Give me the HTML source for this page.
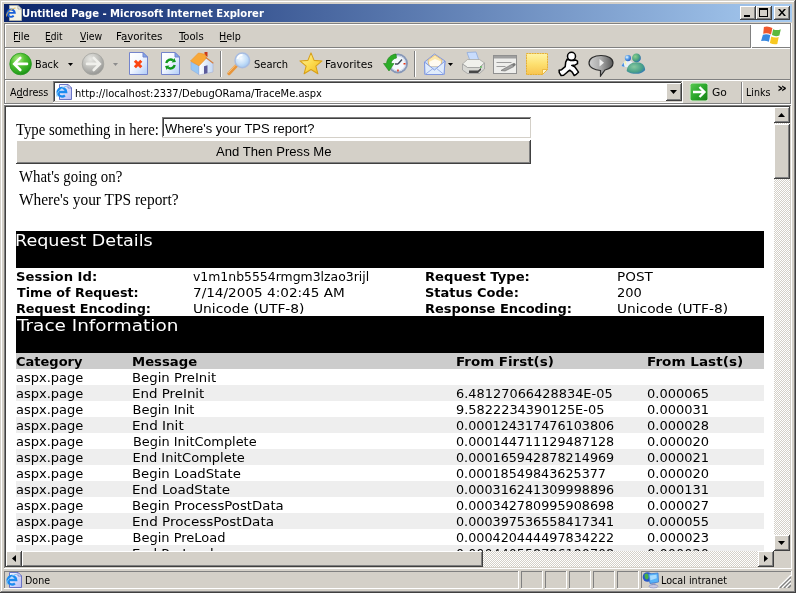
<!DOCTYPE html>
<html><head><meta charset="utf-8"><title>Untitled Page - Microsoft Internet Explorer</title>
<style>
html,body{margin:0;padding:0}
body{width:796px;height:593px;overflow:hidden;background:#d4d0c8;position:relative}
#w{position:absolute;left:0;top:0;width:796px;height:593px;overflow:hidden;will-change:transform}
#w div,#w span,#w svg{position:absolute}
#w span{white-space:pre;line-height:20px;transform-origin:0 0}
#w span.ui{font:11px 'DejaVu Sans Condensed','Liberation Sans',sans-serif;line-height:20px}
#w span.uib{font:bold 11px 'DejaVu Sans Condensed','Liberation Sans',sans-serif;line-height:20px}
#w span.serif{font:16px 'Liberation Serif',serif;line-height:20px}
#w span.arial{font:13.33px 'Liberation Sans',sans-serif;line-height:20px}
#w span.v13{font:13px 'DejaVu Sans','Liberation Sans',sans-serif;line-height:20px}
#w span.v13b{font:bold 13px 'DejaVu Sans','Liberation Sans',sans-serif;line-height:20px}
#w span.v16{font:16px 'DejaVu Sans','Liberation Sans',sans-serif;line-height:20px}
</style></head>
<body><div id="w">
<div style="left:0px;top:0px;width:796px;height:593px;background:#d4d0c8;"></div>
<div style="left:1px;top:1px;width:793px;height:1px;background:#ffffff;"></div>
<div style="left:1px;top:1px;width:1px;height:590px;background:#ffffff;"></div>
<div style="left:0px;top:592px;width:796px;height:1px;background:#404040;"></div>
<div style="left:795px;top:0px;width:1px;height:593px;background:#404040;"></div>
<div style="left:1px;top:591px;width:794px;height:1px;background:#808080;"></div>
<div style="left:794px;top:1px;width:1px;height:591px;background:#808080;"></div>
<div style="left:4px;top:4px;width:788px;height:18px;background:linear-gradient(to right,#0a246a,#a6caf0);"></div>
<svg style="left:6px;top:5px" width="17" height="17" viewBox="0 0 17 17"><path d="M3.500 .5h8.500l3.500 3.500v11.500h-12z" fill="#f2f2e6" stroke="#b8b8a8" stroke-width=".8"/><path d="M12 .5v3.500h3.500z" fill="#fff" stroke="#88887c" stroke-width=".6"/><path d="M1.600 7.900h7.200a3.700 3.700 0 1 0-1.100 2.900" fill="none" stroke="#1860d8" stroke-width="1.900"/><path d="M.6 11.500C-.5 8.500 5 3.500 9.500 3" fill="none" stroke="#e8b850" stroke-width=".9"/></svg>
<span class="uib" style="left:21.99px;top:4.00px;color:#fff;transform:scaleX(1.0126);">Untitled Page - Microsoft Internet Explorer</span>
<div style="left:740px;top:6px;width:16px;height:14px;background:#d4d0c8;"></div>
<div style="left:740px;top:6px;width:15px;height:1px;background:#ffffff;"></div>
<div style="left:740px;top:6px;width:1px;height:13px;background:#ffffff;"></div>
<div style="left:740px;top:19px;width:16px;height:1px;background:#404040;"></div>
<div style="left:755px;top:6px;width:1px;height:14px;background:#404040;"></div>
<div style="left:741px;top:18px;width:14px;height:1px;background:#808080;"></div>
<div style="left:754px;top:7px;width:1px;height:12px;background:#808080;"></div>
<div style="left:756px;top:6px;width:16px;height:14px;background:#d4d0c8;"></div>
<div style="left:756px;top:6px;width:15px;height:1px;background:#ffffff;"></div>
<div style="left:756px;top:6px;width:1px;height:13px;background:#ffffff;"></div>
<div style="left:756px;top:19px;width:16px;height:1px;background:#404040;"></div>
<div style="left:771px;top:6px;width:1px;height:14px;background:#404040;"></div>
<div style="left:757px;top:18px;width:14px;height:1px;background:#808080;"></div>
<div style="left:770px;top:7px;width:1px;height:12px;background:#808080;"></div>
<div style="left:774px;top:6px;width:16px;height:14px;background:#d4d0c8;"></div>
<div style="left:774px;top:6px;width:15px;height:1px;background:#ffffff;"></div>
<div style="left:774px;top:6px;width:1px;height:13px;background:#ffffff;"></div>
<div style="left:774px;top:19px;width:16px;height:1px;background:#404040;"></div>
<div style="left:789px;top:6px;width:1px;height:14px;background:#404040;"></div>
<div style="left:775px;top:18px;width:14px;height:1px;background:#808080;"></div>
<div style="left:788px;top:7px;width:1px;height:12px;background:#808080;"></div>
<div style="left:744px;top:15px;width:6px;height:2px;background:#000;"></div>
<div style="left:759px;top:8px;width:9px;height:9px;background:transparent;border:1px solid #000;border-top:2px solid #000;box-sizing:border-box"></div>
<svg style="left:778px;top:9px" width="8" height="7" viewBox="0 0 8 7"><path d="M0 0h2l2 2.5L6 0h2L5 3.5L8 7h-2L4 4.5L2 7h-2L3 3.5z" fill="#000"/></svg>
<div style="left:4px;top:23px;width:788px;height:1px;background:#808080;"></div>
<div style="left:4px;top:24px;width:788px;height:1px;background:#ffffff;"></div>
<div style="left:4px;top:23px;width:1px;height:82px;background:#808080;"></div>
<div style="left:5px;top:24px;width:1px;height:80px;background:#ffffff;"></div>
<div style="left:4px;top:47px;width:747px;height:1px;background:#808080;"></div>
<div style="left:5px;top:48px;width:787px;height:1px;background:#ffffff;"></div>
<div style="left:4px;top:79px;width:788px;height:1px;background:#808080;"></div>
<div style="left:5px;top:80px;width:786px;height:1px;background:#ffffff;"></div>
<div style="left:4px;top:103px;width:788px;height:1px;background:#808080;"></div>
<div style="left:4px;top:104px;width:788px;height:1px;background:#ffffff;"></div>
<div style="left:790px;top:23px;width:1px;height:81px;background:#808080;"></div>
<div style="left:791px;top:23px;width:1px;height:82px;background:#ffffff;"></div>
<span class="ui" style="left:12.98px;top:27.00px;color:#000;transform:scaleX(1.0200);">File</span>
<span class="ui" style="left:45.08px;top:27.00px;color:#000;transform:scaleX(0.9167);">Edit</span>
<span class="ui" style="left:79.50px;top:27.00px;color:#000;transform:scaleX(0.9435);">View</span>
<span class="ui" style="left:116.46px;top:27.00px;color:#000;transform:scaleX(1.0419);">Favorites</span>
<span class="ui" style="left:179.00px;top:27.00px;color:#000;transform:scaleX(1.0208);">Tools</span>
<span class="ui" style="left:219.03px;top:27.00px;color:#000;transform:scaleX(0.9667);">Help</span>
<div style="left:14px;top:41px;width:6px;height:1px;background:#000;"></div>
<div style="left:46px;top:41px;width:6px;height:1px;background:#000;"></div>
<div style="left:80px;top:41px;width:6px;height:1px;background:#000;"></div>
<div style="left:124px;top:41px;width:6px;height:1px;background:#000;"></div>
<div style="left:179px;top:41px;width:6px;height:1px;background:#000;"></div>
<div style="left:220px;top:41px;width:7px;height:1px;background:#000;"></div>
<div style="left:750px;top:25px;width:1px;height:23px;background:#808080;"></div>
<div style="left:751px;top:24px;width:1px;height:24px;background:#ffffff;"></div>
<div style="left:752px;top:24px;width:38px;height:23px;background:#fff;"></div>
<div style="left:752px;top:47px;width:39px;height:1px;background:#808080;"></div>
<div style="left:790px;top:24px;width:1px;height:24px;background:#808080;"></div>
<div style="left:791px;top:24px;width:1px;height:24px;background:#ffffff;"></div>
<svg style="left:761px;top:26px" width="20" height="19" viewBox="0 0 20 19"><path d="M2.900 1Q7 -.3 11.400 2.100L10 8.400Q6 6.500 2.200 7.700z" fill="#f0582c"/><path d="M12.100 3.200Q16 5 19.800 3.200L18.400 9.500Q14.500 11 11 9.100z" fill="#5cb83c"/><path d="M1.900 8.800Q5.500 7.500 9.300 9.100L7.900 15.800Q4 14 .1 15.100z" fill="#3888e0"/><path d="M10.300 10.500Q14 12.300 17.700 10.900L16.300 17.900Q12.500 18.800 8.900 16.900z" fill="#f8c820"/></svg>
<svg style="left:9px;top:52px" width="24" height="24" viewBox="0 0 24 24"><defs><radialGradient id="gb" cx="38%" cy="28%" r="78%"><stop offset="0" stop-color="#b4ee8c"/><stop offset="0.4" stop-color="#54c232"/><stop offset="0.8" stop-color="#2aa41f"/><stop offset="1" stop-color="#148414"/></radialGradient></defs><circle cx="11.600" cy="12" r="10.800" fill="url(#gb)" stroke="#289a20" stroke-width="0.800"/><path d="M18 11.900H6M11.300 5.800L5.200 11.900l6.100 6.100" stroke="#fff" stroke-width="2.600" fill="none" stroke-linecap="round" stroke-linejoin="miter"/></svg>
<span class="ui" style="left:35.02px;top:55.00px;color:#000;transform:scaleX(0.9783);">Back</span>
<svg style="left:68px;top:63px" width="5" height="3" viewBox="0 0 5 3"><path d="M0 0h5L2.500 3z" fill="#000"/></svg>
<svg style="left:81px;top:52px" width="24" height="24" viewBox="0 0 24 24"><defs><radialGradient id="gf" cx="38%" cy="28%" r="78%"><stop offset="0" stop-color="#e8e8e4"/><stop offset="0.5" stop-color="#c0c0bc"/><stop offset="1" stop-color="#90908e"/></radialGradient></defs><circle cx="12" cy="12" r="10.800" fill="url(#gf)" stroke="#a4a4a0" stroke-width="0.800"/><path d="M6 11.900h12M12.700 5.800l6.100 6.100-6.100 6.100" stroke="#f0f0ec" stroke-width="2.600" fill="none" stroke-linecap="round"/></svg>
<svg style="left:113px;top:63px" width="5" height="3" viewBox="0 0 5 3"><path d="M0 0h5L2.500 3z" fill="#8c8c8c"/></svg>
<svg style="left:129px;top:52px" width="19" height="23" viewBox="0 0 19 23"><defs><linearGradient id="pg1" x1="0" y1="0" x2="1" y2="1"><stop offset="0" stop-color="#ffffff"/><stop offset="0.45" stop-color="#f4f8ff"/><stop offset="1" stop-color="#b0ccf8"/></linearGradient></defs><path d="M.5 .5h13.500l4.500 4.500v17.500h-18z" fill="url(#pg1)" stroke="#7484cc"/><path d="M14 .5v4.500h4.500z" fill="#80a8ec" stroke="#7484cc" stroke-linejoin="round"/><path d="M5.900 8.800l6.400 6.400M12.300 8.800l-6.400 6.400" stroke="#fc4410" stroke-width="3"/></svg>
<svg style="left:161px;top:52px" width="19" height="23" viewBox="0 0 19 23"><defs><linearGradient id="pg2" x1="0" y1="0" x2="1" y2="1"><stop offset="0" stop-color="#ffffff"/><stop offset="0.45" stop-color="#f4f8ff"/><stop offset="1" stop-color="#b0ccf8"/></linearGradient></defs><path d="M.5 .5h13.500l4.500 4.500v17.500h-18z" fill="url(#pg2)" stroke="#7484cc"/><path d="M14 .5v4.500h4.500z" fill="#80a8ec" stroke="#7484cc" stroke-linejoin="round"/><g fill="#10981c" stroke="none"><path d="M5.26 11.01A4.6 4.6 0 0 1 12.00 8.22" fill="none" stroke="#10981c" stroke-width="2.400"/><path d="M13.35 5.88L10.65 10.55L14.94 9.92z"/><path d="M13.74 12.99A4.6 4.6 0 0 1 7.00 15.78" fill="none" stroke="#10981c" stroke-width="2.400"/><path d="M5.65 18.12L8.35 13.45L4.06 14.08z"/></g></svg>
<svg style="left:190px;top:51px" width="24" height="26" viewBox="0 0 24 26"><defs><linearGradient id="gh" x1="0" y1="0" x2="1" y2="0"><stop offset="0" stop-color="#ffffff"/><stop offset="1" stop-color="#c4d8f4"/></linearGradient></defs><path d="M14.500 1h3v5l-3-2z" fill="#c83818"/><path d="M1 11l8 3.500v9l-8-5z" fill="#98c8f4" stroke="#88a8e0" stroke-width=".5"/><path d="M16 7l7 5v9l-14 3v-9.500z" fill="url(#gh)" stroke="#a0a8d0" stroke-width=".5"/><path d="M14 15.300l3.500-1v7.700l-3.500 1z" fill="#5c5c9c"/><path d="M.5 10l8-8 6.500 1.300 1.500 3.700-7.500 7.800z" fill="#f8a838" stroke="#f09020" stroke-width=".6" stroke-linejoin="round"/><path d="M15.800 6.500l7.500 5.800" stroke="#d88040" stroke-width="1.200"/></svg>
<div style="left:220px;top:51px;width:1px;height:26px;background:#808080;"></div>
<div style="left:221px;top:51px;width:1px;height:26px;background:#ffffff;"></div>
<svg style="left:226px;top:51px" width="26" height="25" viewBox="0 0 26 25"><defs><radialGradient id="gl" cx="40%" cy="35%" r="70%"><stop offset="0" stop-color="#f4faff"/><stop offset="0.6" stop-color="#c4def8"/><stop offset="1" stop-color="#9cc4f0"/></radialGradient></defs><path d="M3 22.500l8-8.500" stroke="#e8963c" stroke-width="3.400" stroke-linecap="round"/><path d="M2.200 21.800l7.500-8" stroke="#f8c888" stroke-width="1"/><circle cx="16.300" cy="9.400" r="7.300" fill="url(#gl)" stroke="#a8bce0" stroke-width="1.500"/><path d="M11.500 8a5 5 0 0 1 5-4" stroke="#fff" stroke-width="1.800" fill="none"/></svg>
<span class="ui" style="left:254.00px;top:55.00px;color:#000;">Search</span>
<svg style="left:299px;top:52px" width="24" height="23" viewBox="0 0 26 26"><defs><linearGradient id="gs" x1="0" y1="0" x2="1" y2="1"><stop offset="0" stop-color="#fff8b0"/><stop offset="0.5" stop-color="#fcdc50"/><stop offset="1" stop-color="#f0b820"/></linearGradient></defs><path d="M13 1l3.500 8.500 9 .6-7 5.800 2.300 8.700-7.800-4.900-7.800 4.900 2.300-8.700-7-5.800 9-.6z" fill="url(#gs)" stroke="#d8a018" stroke-width="1.200" stroke-linejoin="round"/></svg>
<span class="ui" style="left:324.93px;top:55.00px;color:#000;transform:scaleX(1.0698);">Favorites</span>
<svg style="left:383px;top:51px" width="27" height="26" viewBox="0 0 27 26"><circle cx="15" cy="12.500" r="9" fill="#f4f8fc" stroke="#8898b8" stroke-width="2"/><circle cx="15" cy="12.500" r="7.500" fill="none" stroke="#c8d4e8" stroke-width="1"/><path d="M15 13l4-4.500M15 13h-3" stroke="#404858" stroke-width="1.400"/><rect x="20.500" y="12" width="2" height="1.500" fill="#e83010"/><rect x="14.200" y="18.500" width="1.500" height="2" fill="#e83010"/><path d="M13 3c-5 .5-9 4-9.500 9.500h-3l5.500 7.500 5-7.500h-3c.5-3 2.500-5 5.500-5.500z" fill="#2cac28" stroke="#1c8418" stroke-width=".6"/></svg>
<div style="left:414px;top:51px;width:1px;height:26px;background:#808080;"></div>
<div style="left:415px;top:51px;width:1px;height:26px;background:#ffffff;"></div>
<svg style="left:423px;top:52px" width="24" height="24" viewBox="0 0 24 24"><path d="M1.500 10l10-8 10.500 7-1 13.500h-19z" fill="#c8dcf8" stroke="#8098e0"/><path d="M5 8l7-5 7 5-1 6h-12z" fill="#fce8b0" stroke="#e0b060" stroke-width=".7"/><path d="M6 10l6-3 6 2.500-1 4.500h-10z" fill="#fffaf0"/><path d="M1.500 10l10 8 10.500-9-1 13.500h-19z" fill="#e0ecfc" stroke="#8098e0" stroke-linejoin="round"/><path d="M2 22.500l8-6M21 22.500l-8-6.500" stroke="#98b0e8" fill="none"/></svg>
<svg style="left:448px;top:63px" width="5" height="3" viewBox="0 0 5 3"><path d="M0 0h5L2.500 3z" fill="#000"/></svg>
<svg style="left:461px;top:51px" width="25" height="25" viewBox="0 0 25 25"><path d="M6 1.500l9-.5 3.500 10h-9z" fill="#c8dcfc" stroke="#90acdc" stroke-width=".8"/><path d="M1.500 13l5-4.500h12l5 3.500-5 4.500h-12z" fill="#f0f0ec" stroke="#a0a09c" stroke-width=".7"/><path d="M1.500 13l5 3.500h12l5-4.500v6l-5 4.500h-12l-5-3.500z" fill="#d8d8d4" stroke="#98989a" stroke-width=".7"/><path d="M8 19.500h9l3-2.500v2l-3 3h-9z" fill="#484848"/><rect x="19" y="15.500" width="2" height="1" fill="#30b030"/></svg>
<svg style="left:493px;top:55px" width="24" height="19" viewBox="0 0 24 19"><rect x=".5" y=".5" width="23" height="18" fill="#eeeeec" stroke="#909090"/><rect x="1" y="1" width="22" height="2.500" fill="#a0a0a0"/><path d="M3.500 7.500h15M3.500 11.500h9" stroke="#9c9c9c"/><path d="M8 15.500l2.500-1.500 9-5 1.500 2.500-9 4.500z" fill="#a4a4a4" stroke="#686868" stroke-width=".6"/><circle cx="21" cy="9.500" r="1.600" fill="#787878"/></svg>
<svg style="left:525px;top:53px" width="24" height="22" viewBox="0 0 24 22"><defs><linearGradient id="gn" x1="0" y1="0" x2="0" y2="1"><stop offset="0" stop-color="#fff4a8"/><stop offset="0.5" stop-color="#fde070"/><stop offset="1" stop-color="#f8c450"/></linearGradient></defs><path d="M1.500 .5h21v16l-5 5h-16z" fill="url(#gn)" stroke="#e8b030" stroke-dasharray="2 .6"/><path d="M22.500 16.500h-5v5z" fill="#fff6c8" stroke="#e8b030" stroke-width=".8"/></svg>
<svg style="left:557px;top:51px" width="25" height="27" viewBox="0 0 25 27"><g fill="#fff" stroke="#000" stroke-width="1.500" stroke-linejoin="round"><path d="M10.200 8.100L8.700 11.100L8.200 15.700L4.600 18.700L2.100 19.200L2.300 21.700L4.100 24.500L6.600 24.300L10.200 21.200L12.700 19.200L15.200 21.200L17.200 24.500L19.300 23.300L21.500 21.200L19.800 18.700L17.700 15.700L14.700 14.400L18.300 13.900L20.500 12.700L20.500 10.100L18.800 9.100L16.700 9.600L13.200 9.400z"/><circle cx="14.500" cy="5.300" r="4"/></g></svg>
<svg style="left:587px;top:52px" width="28" height="25" viewBox="0 0 28 25"><defs><linearGradient id="gq" x1="0" y1="0" x2="1" y2="0"><stop offset="0" stop-color="#d0d0d0"/><stop offset="0.5" stop-color="#a8a8a8"/><stop offset="1" stop-color="#585858"/></linearGradient></defs><path d="M14 3.500c7 0 12 3 12 7.500 0 3.500-4 6-8 7l-4.500 6v-5.500c-6-.3-11.500-3-11.500-7.500s5-7.500 12-7.500z" fill="url(#gq)" stroke="#2c2c2c" stroke-width="1.200"/><path d="M12.500 7l4.500 3.800-4.500 3.800z" fill="#f0f0f0"/></svg>
<svg style="left:620px;top:52px" width="27" height="24" viewBox="0 0 27 24"><defs><radialGradient id="gm1" cx="35%" cy="35%" r="75%"><stop offset="0" stop-color="#8cd08c"/><stop offset="0.6" stop-color="#48a080"/><stop offset="1" stop-color="#2860c0"/></radialGradient><radialGradient id="gm2" cx="40%" cy="40%" r="75%"><stop offset="0" stop-color="#88c8a0"/><stop offset="0.6" stop-color="#48a088"/><stop offset="1" stop-color="#2868c8"/></radialGradient><radialGradient id="gm3" cx="35%" cy="35%" r="70%"><stop offset="0" stop-color="#f0f8ff"/><stop offset="0.5" stop-color="#58a0e8"/><stop offset="1" stop-color="#2858c0"/></radialGradient></defs><path d="M1.500 14C3 9.500 6 8.500 8 8.500s4.500 1 5 3L8 15.500z" fill="#e8f0f8"/><path d="M1.500 14l2-3.500 1 4.500z" fill="#4890e0"/><path d="M4 10.500l2-1.800.5 5z" fill="#f8f4b0"/><circle cx="7.900" cy="6.100" r="3.100" fill="url(#gm3)"/><circle cx="16.500" cy="5.900" r="4.400" fill="url(#gm1)"/><path d="M6.700 19C7 13 11 10.200 16.500 10.200S25 13 25.100 18C23 21 19 21.800 16 21.800S8.500 21 6.700 19z" fill="url(#gm2)"/></svg>
<span class="ui" style="left:10.00px;top:83.00px;color:#000;transform:scaleX(0.9744);">Address</span>
<div style="left:17px;top:97px;width:6px;height:1px;background:#000;"></div>
<div style="left:53px;top:81px;width:630px;height:22px;background:#fff;"></div>
<div style="left:53px;top:81px;width:629px;height:1px;background:#808080;"></div>
<div style="left:53px;top:81px;width:1px;height:21px;background:#808080;"></div>
<div style="left:54px;top:82px;width:627px;height:1px;background:#404040;"></div>
<div style="left:54px;top:82px;width:1px;height:19px;background:#404040;"></div>
<div style="left:53px;top:102px;width:630px;height:1px;background:#ffffff;"></div>
<div style="left:682px;top:81px;width:1px;height:22px;background:#ffffff;"></div>
<div style="left:54px;top:101px;width:628px;height:1px;background:#d4d0c8;"></div>
<div style="left:681px;top:82px;width:1px;height:20px;background:#d4d0c8;"></div>
<svg style="left:56px;top:84px" width="17" height="17" viewBox="0 0 17 17"><defs><linearGradient id="ie1" x1="0" y1="0" x2="1" y2="1"><stop offset="0" stop-color="#f8f8ff"/><stop offset="1" stop-color="#b8bcf4"/></linearGradient></defs><path d="M3.500 .5h8.500l3.500 3.500v11.500h-12z" fill="url(#ie1)" stroke="#5c68c0" stroke-width=".9"/><path d="M12 .5v3.500h3.500z" fill="#eef" stroke="#5c68c0" stroke-width=".7"/><path d="M1.800 8h8.400a4.300 4.300 0 1 0-1.300 3.300" fill="none" stroke="#1c8cf0" stroke-width="2.300"/><path d="M1 12.700C-.5 9.200 6 2.700 11 2.200" fill="none" stroke="#7cc4f8" stroke-width="1"/></svg>
<span class="ui" style="left:75.00px;top:84.00px;color:#000;transform:scaleX(1.0041);">http://localhost:2337/DebugORama/TraceMe.aspx</span>
<div style="left:666px;top:83px;width:16px;height:18px;background:#d4d0c8;"></div>
<div style="left:666px;top:83px;width:15px;height:1px;background:#ffffff;"></div>
<div style="left:666px;top:83px;width:1px;height:17px;background:#ffffff;"></div>
<div style="left:666px;top:100px;width:16px;height:1px;background:#404040;"></div>
<div style="left:681px;top:83px;width:1px;height:18px;background:#404040;"></div>
<div style="left:667px;top:99px;width:14px;height:1px;background:#808080;"></div>
<div style="left:680px;top:84px;width:1px;height:16px;background:#808080;"></div>
<svg style="left:670px;top:90px" width="7" height="4" viewBox="0 0 7 4"><path d="M0 0h7L3.500 4z" fill="#000"/></svg>
<svg style="left:689px;top:82px" width="20" height="20" viewBox="0 0 20 20"><defs><linearGradient id="gg" x1="0" y1="0" x2="1" y2="1"><stop offset="0" stop-color="#58c850"/><stop offset="0.5" stop-color="#2ca82c"/><stop offset="1" stop-color="#168016"/></linearGradient></defs><rect x=".5" y=".5" width="19" height="19" rx="2.500" fill="#e4f0dc" stroke="#c8d4c0" stroke-width=".6"/><rect x="1.500" y="1.500" width="17" height="17" rx="1.800" fill="url(#gg)"/><path d="M4 10h11M10.500 5l5 5-5 5" stroke="#fff" stroke-width="2.300" fill="none"/></svg>
<span class="ui" style="left:711.92px;top:83.00px;color:#000;transform:scaleX(1.0833);">Go</span>
<div style="left:741px;top:82px;width:1px;height:21px;background:#808080;"></div>
<div style="left:742px;top:82px;width:1px;height:21px;background:#ffffff;"></div>
<span class="ui" style="left:745.54px;top:83.00px;color:#000;transform:scaleX(0.9583);">Links</span>
<span class="ui" style="left:776.67px;top:78.00px;color:#000;transform:scaleX(1.3333);font-weight:bold;font-size:13px">»</span>
<div style="left:4px;top:105px;width:788px;height:464px;background:#fff;"></div>
<div style="left:4px;top:105px;width:787px;height:1px;background:#808080;"></div>
<div style="left:4px;top:105px;width:1px;height:463px;background:#808080;"></div>
<div style="left:5px;top:106px;width:785px;height:1px;background:#404040;"></div>
<div style="left:5px;top:106px;width:1px;height:461px;background:#404040;"></div>
<div style="left:4px;top:568px;width:788px;height:1px;background:#ffffff;"></div>
<div style="left:791px;top:105px;width:1px;height:464px;background:#ffffff;"></div>
<div style="left:5px;top:567px;width:786px;height:1px;background:#d4d0c8;"></div>
<div style="left:790px;top:106px;width:1px;height:462px;background:#d4d0c8;"></div>
<span class="serif" style="left:16.00px;top:120.00px;color:#000;transform:scaleX(0.9221);">Type something in here:</span>
<div style="left:162px;top:117px;width:369px;height:21px;background:#fff;"></div>
<div style="left:162px;top:117px;width:369px;height:1px;background:#808080;"></div>
<div style="left:162px;top:117px;width:1px;height:20px;background:#808080;"></div>
<div style="left:163px;top:118px;width:367px;height:1px;background:#404040;"></div>
<div style="left:163px;top:118px;width:1px;height:18px;background:#404040;"></div>
<div style="left:162px;top:137px;width:369px;height:1px;background:#d4d0c8;"></div>
<div style="left:530px;top:118px;width:1px;height:20px;background:#d4d0c8;"></div>
<span class="arial" style="left:165.00px;top:119.00px;color:#000;transform:scaleX(0.9739);">Where&#x27;s your TPS report?</span>
<div style="left:16px;top:140px;width:515px;height:24px;background:#d4d0c8;"></div>
<div style="left:16px;top:140px;width:514px;height:1px;background:#ffffff;"></div>
<div style="left:16px;top:140px;width:1px;height:23px;background:#ffffff;"></div>
<div style="left:16px;top:163px;width:515px;height:1px;background:#404040;"></div>
<div style="left:530px;top:140px;width:1px;height:24px;background:#404040;"></div>
<div style="left:17px;top:162px;width:513px;height:1px;background:#808080;"></div>
<div style="left:529px;top:141px;width:1px;height:22px;background:#808080;"></div>
<span class="arial" style="left:216.00px;top:142.00px;color:#000;transform:scaleX(0.9829);">And Then Press Me</span>
<span class="serif" style="left:19.00px;top:167.00px;color:#000;transform:scaleX(0.9279);">What&#x27;s going on?</span>
<span class="serif" style="left:19.00px;top:190.00px;color:#000;transform:scaleX(0.9636);">Where&#x27;s your TPS report?</span>
<div style="left:16px;top:231px;width:748px;height:37px;background:#000;"></div>
<span class="v16" style="left:15.30px;top:231.00px;color:#fff;transform:scaleX(1.0968);">Request Details</span>
<span class="v13b" style="left:15.99px;top:267.00px;color:#000;transform:scaleX(1.0128);">Session Id:</span>
<span class="v13" style="left:193.04px;top:267.00px;color:#000;transform:scaleX(0.9560);">v1m1nb5554rmgm3lzao3rijl</span>
<span class="v13b" style="left:424.99px;top:267.00px;color:#000;transform:scaleX(1.0099);">Request Type:</span>
<span class="v13" style="left:616.95px;top:267.00px;color:#000;transform:scaleX(1.0455);">POST</span>
<span class="v13b" style="left:17.00px;top:283.00px;color:#000;transform:scaleX(0.9756);">Time of Request:</span>
<span class="v13" style="left:192.95px;top:283.00px;color:#000;transform:scaleX(1.0455);">7/14/2005 4:02:45 AM</span>
<span class="v13b" style="left:425.00px;top:283.00px;color:#000;">Status Code:</span>
<span class="v13" style="left:617.00px;top:283.00px;color:#000;">200</span>
<span class="v13b" style="left:16.01px;top:299.00px;color:#000;transform:scaleX(0.9852);">Request Encoding:</span>
<span class="v13" style="left:192.94px;top:299.00px;color:#000;transform:scaleX(1.0631);">Unicode (UTF-8)</span>
<span class="v13b" style="left:425.00px;top:299.00px;color:#000;transform:scaleX(0.9966);">Response Encoding:</span>
<span class="v13" style="left:616.94px;top:299.00px;color:#000;transform:scaleX(1.0583);">Unicode (UTF-8)</span>
<div style="left:16px;top:316px;width:748px;height:37px;background:#000;"></div>
<span class="v16" style="left:17.00px;top:316.00px;color:#fff;transform:scaleX(1.1511);">Trace Information</span>
<div style="left:16px;top:353px;width:748px;height:16px;background:#cccccc;"></div>
<span class="v13b" style="left:16.00px;top:352.00px;color:#000;">Category</span>
<span class="v13b" style="left:131.98px;top:352.00px;color:#000;transform:scaleX(1.0161);">Message</span>
<span class="v13b" style="left:455.97px;top:352.00px;color:#000;transform:scaleX(1.0323);">From First(s)</span>
<span class="v13b" style="left:646.96px;top:352.00px;color:#000;transform:scaleX(1.0444);">From Last(s)</span>
<span class="v13" style="left:16.00px;top:368.00px;color:#000;">aspx.page</span>
<span class="v13" style="left:132.48px;top:368.00px;color:#000;transform:scaleX(1.0185);">Begin PreInit</span>
<div style="left:16px;top:385px;width:748px;height:16px;background:#eeeeee;"></div>
<span class="v13" style="left:16.00px;top:384.00px;color:#000;">aspx.page</span>
<span class="v13" style="left:132.47px;top:384.00px;color:#000;transform:scaleX(1.0290);">End PreInit</span>
<span class="v13" style="left:456.01px;top:384.00px;color:#000;transform:scaleX(0.9935);">6.48127066428834E-05</span>
<span class="v13" style="left:647.00px;top:384.00px;color:#000;">0.000065</span>
<span class="v13" style="left:16.00px;top:400.00px;color:#000;">aspx.page</span>
<span class="v13" style="left:132.50px;top:400.00px;color:#000;">Begin Init</span>
<span class="v13" style="left:456.01px;top:400.00px;color:#000;transform:scaleX(0.9932);">9.5822234390125E-05</span>
<span class="v13" style="left:647.00px;top:400.00px;color:#000;">0.000031</span>
<div style="left:16px;top:417px;width:748px;height:16px;background:#eeeeee;"></div>
<span class="v13" style="left:16.00px;top:416.00px;color:#000;">aspx.page</span>
<span class="v13" style="left:132.46px;top:416.00px;color:#000;transform:scaleX(1.0417);">End Init</span>
<span class="v13" style="left:456.02px;top:416.00px;color:#000;transform:scaleX(0.9811);">0.000124317476103806</span>
<span class="v13" style="left:647.00px;top:416.00px;color:#000;">0.000028</span>
<span class="v13" style="left:16.00px;top:432.00px;color:#000;">aspx.page</span>
<span class="v13" style="left:132.51px;top:432.00px;color:#000;transform:scaleX(0.9919);">Begin InitComplete</span>
<span class="v13" style="left:456.02px;top:432.00px;color:#000;transform:scaleX(0.9811);">0.000144711129487128</span>
<span class="v13" style="left:647.00px;top:432.00px;color:#000;">0.000020</span>
<div style="left:16px;top:449px;width:748px;height:16px;background:#eeeeee;"></div>
<span class="v13" style="left:16.00px;top:448.00px;color:#000;">aspx.page</span>
<span class="v13" style="left:132.50px;top:448.00px;color:#000;">End InitComplete</span>
<span class="v13" style="left:456.02px;top:448.00px;color:#000;transform:scaleX(0.9811);">0.000165942878214969</span>
<span class="v13" style="left:647.00px;top:448.00px;color:#000;">0.000021</span>
<span class="v13" style="left:16.00px;top:464.00px;color:#000;">aspx.page</span>
<span class="v13" style="left:132.48px;top:464.00px;color:#000;transform:scaleX(1.0190);">Begin LoadState</span>
<span class="v13" style="left:456.02px;top:464.00px;color:#000;transform:scaleX(0.9801);">0.00018549843625377</span>
<span class="v13" style="left:647.00px;top:464.00px;color:#000;">0.000020</span>
<div style="left:16px;top:481px;width:748px;height:16px;background:#eeeeee;"></div>
<span class="v13" style="left:16.00px;top:480.00px;color:#000;">aspx.page</span>
<span class="v13" style="left:132.46px;top:480.00px;color:#000;transform:scaleX(1.0376);">End LoadState</span>
<span class="v13" style="left:456.02px;top:480.00px;color:#000;transform:scaleX(0.9811);">0.000316241309998896</span>
<span class="v13" style="left:647.00px;top:480.00px;color:#000;">0.000131</span>
<span class="v13" style="left:16.00px;top:496.00px;color:#000;">aspx.page</span>
<span class="v13" style="left:132.48px;top:496.00px;color:#000;transform:scaleX(1.0204);">Begin ProcessPostData</span>
<span class="v13" style="left:456.02px;top:496.00px;color:#000;transform:scaleX(0.9811);">0.000342780995908698</span>
<span class="v13" style="left:647.00px;top:496.00px;color:#000;">0.000027</span>
<div style="left:16px;top:513px;width:748px;height:16px;background:#eeeeee;"></div>
<span class="v13" style="left:16.00px;top:512.00px;color:#000;">aspx.page</span>
<span class="v13" style="left:132.46px;top:512.00px;color:#000;transform:scaleX(1.0410);">End ProcessPostData</span>
<span class="v13" style="left:456.02px;top:512.00px;color:#000;transform:scaleX(0.9811);">0.000397536558417341</span>
<span class="v13" style="left:647.00px;top:512.00px;color:#000;">0.000055</span>
<span class="v13" style="left:16.00px;top:528.00px;color:#000;">aspx.page</span>
<span class="v13" style="left:132.50px;top:528.00px;color:#000;">Begin PreLoad</span>
<span class="v13" style="left:456.02px;top:528.00px;color:#000;transform:scaleX(0.9811);">0.000420444497834222</span>
<span class="v13" style="left:647.00px;top:528.00px;color:#000;">0.000023</span>
<div style="left:16px;top:545px;width:748px;height:16px;background:#eeeeee;"></div>
<span class="v13" style="left:16.00px;top:544.00px;color:#000;">aspx.page</span>
<span class="v13" style="left:132.49px;top:544.00px;color:#000;transform:scaleX(1.0127);">End PreLoad</span>
<span class="v13" style="left:456.02px;top:544.00px;color:#000;transform:scaleX(0.9811);">0.000440558786190708</span>
<span class="v13" style="left:647.00px;top:544.00px;color:#000;">0.000020</span>
<div style="left:774px;top:107px;width:16px;height:444px;background:repeating-conic-gradient(#fff 0% 25%, #d4d0c8 0% 50%) 0 0/2px 2px;"></div>
<div style="left:774px;top:107px;width:16px;height:16px;background:#d4d0c8;"></div>
<div style="left:774px;top:107px;width:15px;height:1px;background:#ffffff;"></div>
<div style="left:774px;top:107px;width:1px;height:15px;background:#ffffff;"></div>
<div style="left:774px;top:122px;width:16px;height:1px;background:#404040;"></div>
<div style="left:789px;top:107px;width:1px;height:16px;background:#404040;"></div>
<div style="left:775px;top:121px;width:14px;height:1px;background:#808080;"></div>
<div style="left:788px;top:108px;width:1px;height:14px;background:#808080;"></div>
<svg style="left:778px;top:113px" width="7" height="4" viewBox="0 0 7 4"><path d="M3.500 0L7 4h-7z" fill="#000"/></svg>
<div style="left:774px;top:124px;width:16px;height:55px;background:#d4d0c8;"></div>
<div style="left:774px;top:124px;width:15px;height:1px;background:#ffffff;"></div>
<div style="left:774px;top:124px;width:1px;height:54px;background:#ffffff;"></div>
<div style="left:774px;top:178px;width:16px;height:1px;background:#404040;"></div>
<div style="left:789px;top:124px;width:1px;height:55px;background:#404040;"></div>
<div style="left:775px;top:177px;width:14px;height:1px;background:#808080;"></div>
<div style="left:788px;top:125px;width:1px;height:53px;background:#808080;"></div>
<div style="left:774px;top:535px;width:16px;height:16px;background:#d4d0c8;"></div>
<div style="left:774px;top:535px;width:15px;height:1px;background:#ffffff;"></div>
<div style="left:774px;top:535px;width:1px;height:15px;background:#ffffff;"></div>
<div style="left:774px;top:550px;width:16px;height:1px;background:#404040;"></div>
<div style="left:789px;top:535px;width:1px;height:16px;background:#404040;"></div>
<div style="left:775px;top:549px;width:14px;height:1px;background:#808080;"></div>
<div style="left:788px;top:536px;width:1px;height:14px;background:#808080;"></div>
<svg style="left:778px;top:541px" width="7" height="4" viewBox="0 0 7 4"><path d="M0 0h7L3.500 4z" fill="#000"/></svg>
<div style="left:6px;top:551px;width:768px;height:16px;background:repeating-conic-gradient(#fff 0% 25%, #d4d0c8 0% 50%) 0 0/2px 2px;"></div>
<div style="left:6px;top:551px;width:16px;height:16px;background:#d4d0c8;"></div>
<div style="left:6px;top:551px;width:15px;height:1px;background:#ffffff;"></div>
<div style="left:6px;top:551px;width:1px;height:15px;background:#ffffff;"></div>
<div style="left:6px;top:566px;width:16px;height:1px;background:#404040;"></div>
<div style="left:21px;top:551px;width:1px;height:16px;background:#404040;"></div>
<div style="left:7px;top:565px;width:14px;height:1px;background:#808080;"></div>
<div style="left:20px;top:552px;width:1px;height:14px;background:#808080;"></div>
<svg style="left:12px;top:555px" width="4" height="7" viewBox="0 0 4 7"><path d="M4 0v7L0 3.500z" fill="#000"/></svg>
<div style="left:22px;top:551px;width:461px;height:16px;background:#d4d0c8;"></div>
<div style="left:22px;top:551px;width:460px;height:1px;background:#ffffff;"></div>
<div style="left:22px;top:551px;width:1px;height:15px;background:#ffffff;"></div>
<div style="left:22px;top:566px;width:461px;height:1px;background:#404040;"></div>
<div style="left:482px;top:551px;width:1px;height:16px;background:#404040;"></div>
<div style="left:23px;top:565px;width:459px;height:1px;background:#808080;"></div>
<div style="left:481px;top:552px;width:1px;height:14px;background:#808080;"></div>
<div style="left:758px;top:551px;width:16px;height:16px;background:#d4d0c8;"></div>
<div style="left:758px;top:551px;width:15px;height:1px;background:#ffffff;"></div>
<div style="left:758px;top:551px;width:1px;height:15px;background:#ffffff;"></div>
<div style="left:758px;top:566px;width:16px;height:1px;background:#404040;"></div>
<div style="left:773px;top:551px;width:1px;height:16px;background:#404040;"></div>
<div style="left:759px;top:565px;width:14px;height:1px;background:#808080;"></div>
<div style="left:772px;top:552px;width:1px;height:14px;background:#808080;"></div>
<svg style="left:764px;top:555px" width="4" height="7" viewBox="0 0 4 7"><path d="M0 0v7L4 3.500z" fill="#000"/></svg>
<div style="left:774px;top:551px;width:16px;height:16px;background:#d4d0c8;"></div>
<div style="left:4px;top:571px;width:515px;height:1px;background:#808080;"></div>
<div style="left:4px;top:571px;width:1px;height:18px;background:#808080;"></div>
<div style="left:4px;top:588px;width:515px;height:1px;background:#ffffff;"></div>
<div style="left:518px;top:571px;width:1px;height:18px;background:#ffffff;"></div>
<div style="left:521px;top:571px;width:22px;height:1px;background:#808080;"></div>
<div style="left:521px;top:571px;width:1px;height:18px;background:#808080;"></div>
<div style="left:521px;top:588px;width:22px;height:1px;background:#ffffff;"></div>
<div style="left:542px;top:571px;width:1px;height:18px;background:#ffffff;"></div>
<div style="left:545px;top:571px;width:22px;height:1px;background:#808080;"></div>
<div style="left:545px;top:571px;width:1px;height:18px;background:#808080;"></div>
<div style="left:545px;top:588px;width:22px;height:1px;background:#ffffff;"></div>
<div style="left:566px;top:571px;width:1px;height:18px;background:#ffffff;"></div>
<div style="left:569px;top:571px;width:22px;height:1px;background:#808080;"></div>
<div style="left:569px;top:571px;width:1px;height:18px;background:#808080;"></div>
<div style="left:569px;top:588px;width:22px;height:1px;background:#ffffff;"></div>
<div style="left:590px;top:571px;width:1px;height:18px;background:#ffffff;"></div>
<div style="left:593px;top:571px;width:22px;height:1px;background:#808080;"></div>
<div style="left:593px;top:571px;width:1px;height:18px;background:#808080;"></div>
<div style="left:593px;top:588px;width:22px;height:1px;background:#ffffff;"></div>
<div style="left:614px;top:571px;width:1px;height:18px;background:#ffffff;"></div>
<div style="left:617px;top:571px;width:22px;height:1px;background:#808080;"></div>
<div style="left:617px;top:571px;width:1px;height:18px;background:#808080;"></div>
<div style="left:617px;top:588px;width:22px;height:1px;background:#ffffff;"></div>
<div style="left:638px;top:571px;width:1px;height:18px;background:#ffffff;"></div>
<div style="left:641px;top:571px;width:151px;height:1px;background:#808080;"></div>
<div style="left:641px;top:571px;width:1px;height:18px;background:#808080;"></div>
<div style="left:641px;top:588px;width:151px;height:1px;background:#ffffff;"></div>
<div style="left:791px;top:571px;width:1px;height:18px;background:#ffffff;"></div>
<svg style="left:6px;top:572px" width="17" height="17" viewBox="0 0 17 17"><defs><linearGradient id="ie2" x1="0" y1="0" x2="1" y2="1"><stop offset="0" stop-color="#f8f8ff"/><stop offset="1" stop-color="#b8bcf4"/></linearGradient></defs><path d="M3.500 .5h8.500l3.500 3.500v11.500h-12z" fill="url(#ie2)" stroke="#5c68c0" stroke-width=".9"/><path d="M12 .5v3.500h3.500z" fill="#eef" stroke="#5c68c0" stroke-width=".7"/><path d="M1.800 8h8.400a4.300 4.300 0 1 0-1.300 3.300" fill="none" stroke="#1c8cf0" stroke-width="2.300"/><path d="M1 12.700C-.5 9.200 6 2.700 11 2.200" fill="none" stroke="#7cc4f8" stroke-width="1"/></svg>
<span class="ui" style="left:25.04px;top:571.00px;color:#000;transform:scaleX(0.9600);">Done</span>
<svg style="left:642px;top:571px" width="18" height="18" viewBox="0 0 18 18"><circle cx="5.500" cy="6" r="4.800" fill="#2858c8"/><path d="M2.500 3.500q2.500-2 4 .5t-1.500 4.500q-2.500 0-2.500-5z" fill="#48b048"/><path d="M6.500 3l9.500-1 .5 9-8.500 1.500z" fill="#58b4f8" stroke="#3878d0" stroke-width=".8"/><path d="M8 4.500l6.500-.8.200 3.500-6.300 2z" fill="#a8dcff"/><path d="M9.500 12.500h4v2h-4z" fill="#7888c0"/><ellipse cx="11.500" cy="15.300" rx="4.500" ry="1.700" fill="#c8c8e0" stroke="#8088b8" stroke-width=".6"/></svg>
<span class="ui" style="left:661.03px;top:571.00px;color:#000;transform:scaleX(0.9701);">Local intranet</span>
<div style="left:779px;top:576px;width:13px;height:13px;background:#d4d0c8;"></div>
<svg style="left:778px;top:575px" width="13" height="13" viewBox="0 0 13 13"><path d="M1.800 13L13 1.800M5.800 13L13 5.800M9.800 13L13 9.800" stroke="#808080" stroke-width="1.900"/><path d="M0 13L13 0M4 13L13 4M8 13L13 8" stroke="#fff" stroke-width="1.300"/></svg>
</div></body></html>
